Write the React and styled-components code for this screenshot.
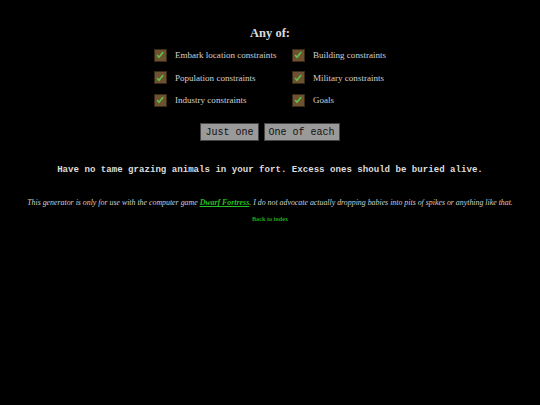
import React from "react";
import styled, { createGlobalStyle } from "styled-components";

const Global = createGlobalStyle`
  html, body { margin: 0; padding: 0; background: #000; }
  body { font-family: "Liberation Serif", "Times New Roman", serif; color: #d0d0d0; }
`;

const Page = styled.div`
  display: flex;
  flex-direction: column;
  align-items: center;
  padding-top: 26px;
`;

const Heading = styled.h2`
  margin: 0 0 7px;
  font-size: 12.5px;
  font-weight: bold;
  color: #dcdcdc;
`;

const Grid = styled.div`
  display: grid;
  grid-template-columns: 138px auto;
  row-gap: 8.7px;
`;

const Option = styled.label`
  display: flex;
  align-items: center;
  gap: 8px;
  font-size: 9.05px;
  color: #d0d0d0;
  height: 14px;
`;

const Box = styled.span`
  width: 11px;
  height: 11px;
  background: #6e5131;
  border: 1px solid #3a2a18;
  display: flex;
  align-items: center;
  justify-content: center;
`;

const Buttons = styled.div`
  display: flex;
  gap: 5px;
  margin-top: 16px;
`;

const Button = styled.button`
  font-family: "Liberation Mono", "Courier New", monospace;
  font-size: 10px;
  background: #9a9a9a;
  color: #111;
  border: 1px solid #444;
  padding: 1px 4px;
  height: 18px;
  cursor: pointer;
`;

const Quote = styled.p`
  margin: 23px 0 0;
  font-family: "Liberation Mono", "Courier New", monospace;
  font-weight: bold;
  font-size: 9.1px;
  color: #dcdcdc;
`;

const Disclaimer = styled.p`
  margin: 23px 0 0;
  font-style: italic;
  font-size: 7.87px;
  color: #d0d0d0;
`;

const GameLink = styled.a`
  color: #22c022;
  font-weight: bold;
  text-decoration: underline;
`;

const Back = styled.a`
  margin-top: 8px;
  font-size: 6.2px;
  font-weight: bold;
  color: #1fa51f;
  text-decoration: underline;
`;

const Check = () => (
  <svg width="8" height="8" viewBox="0 0 8 8">
    <path d="M1.5 4.5 L3 6.3 L6.8 1.6" stroke="#5ec44a" strokeWidth="1.6" fill="none" strokeLinecap="round" />
  </svg>
);

const options = [
  "Embark location constraints",
  "Building constraints",
  "Population constraints",
  "Military constraints",
  "Industry constraints",
  "Goals",
];

export default function App() {
  return (
    <>
      <Global />
      <Page>
        <Heading>Any of:</Heading>
        <Grid>
          {options.map((o) => (
            <Option key={o}>
              <Box><Check /></Box>
              {o}
            </Option>
          ))}
        </Grid>
        <Buttons>
          <Button>Just one</Button>
          <Button>One of each</Button>
        </Buttons>
        <Quote>Have no tame grazing animals in your fort. Excess ones should be buried alive.</Quote>
        <Disclaimer>
          This generator is only for use with the computer game <GameLink href="#">Dwarf Fortress</GameLink>. I do not advocate actually dropping babies into pits of spikes or anything like that.
        </Disclaimer>
        <Back href="#">Back to index</Back>
      </Page>
    </>
  );
}
